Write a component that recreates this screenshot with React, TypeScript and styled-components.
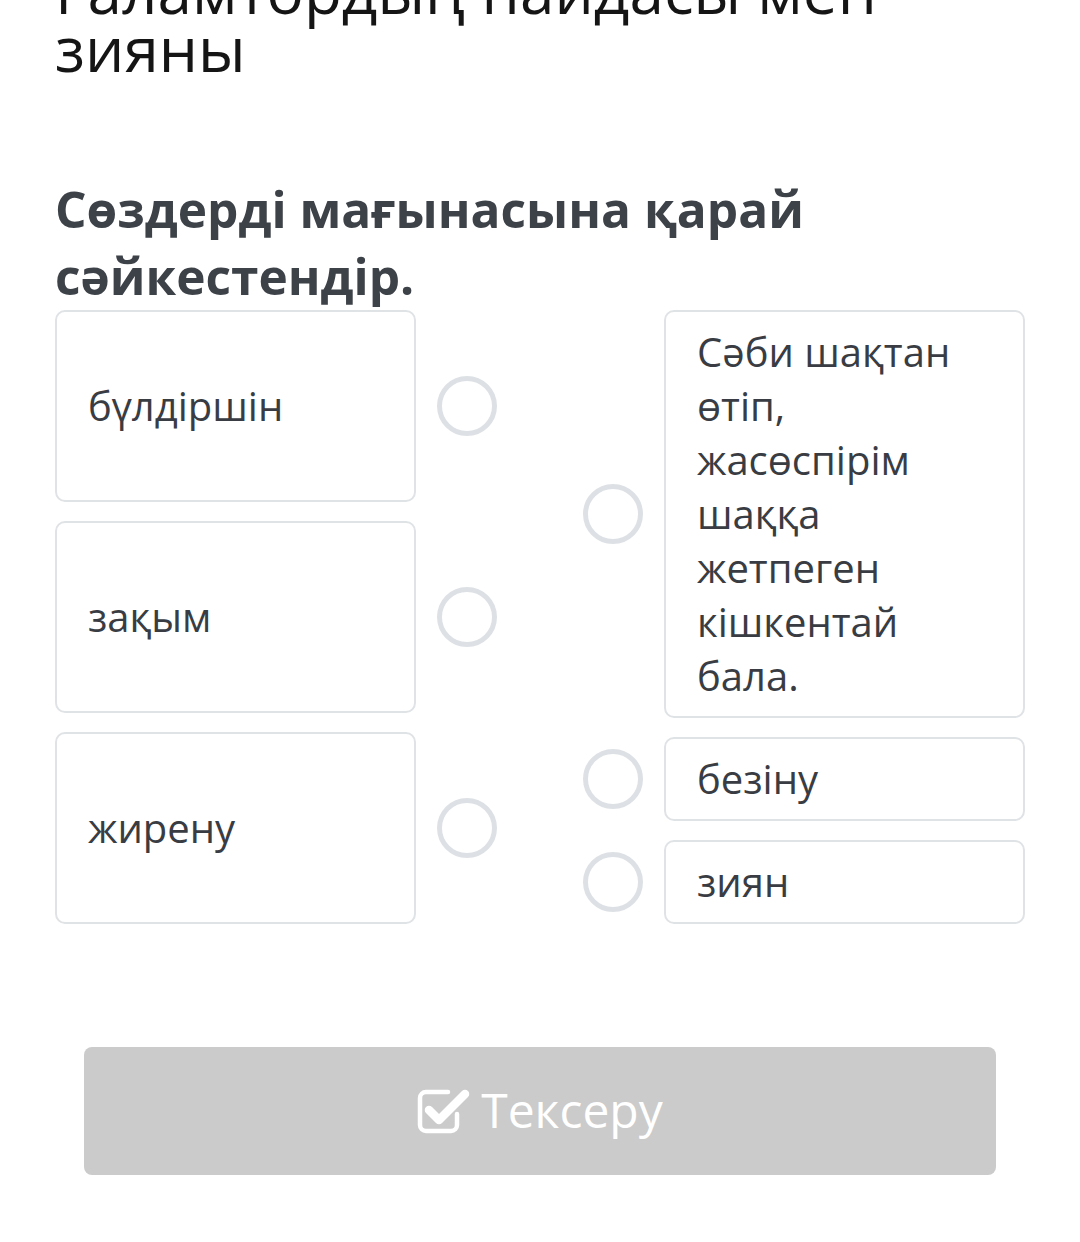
import styled, { createGlobalStyle } from "styled-components";

const GlobalStyle = createGlobalStyle`
    html, body {
        margin: 0;
        padding: 0;
        background: #ffffff;
    }
    body {
        font-family: "Open Sans", "Noto Sans", sans-serif;
        overflow: hidden;
    }
`;

const Page = styled.div`
    padding: 0 55px;
    width: 1080px;
    height: 1242px;
    box-sizing: border-box;
    overflow: hidden;
`;

const Title = styled.h1`
    margin: -39px 0 0 0;
    font-size: 62px;
    line-height: 58px;
    font-weight: 400;
    color: #151515;
`;

const Question = styled.h2`
    margin: 99px 0 0 0;
    font-size: 49.6px;
    line-height: 67px;
    font-weight: 700;
    color: #3d4249;
`;

const Board = styled.div`
    display: flex;
    gap: 86px;
`;

const Column = styled.div`
    display: flex;
    flex-direction: column;
    gap: 19px;
`;

const Row = styled.div<{ $grow?: boolean }>`
    display: flex;
    align-items: center;
    gap: 21px;
    flex: ${(p) => (p.$grow ? "1" : "0 0 auto")};
`;

const Card = styled.div<{ $fill?: boolean }>`
    width: 361px;
    box-sizing: border-box;
    align-self: ${(p) => (p.$fill ? "stretch" : "auto")};
    display: flex;
    align-items: center;
    padding: 13px 31px;
    border: 2px solid #e0e3e6;
    border-radius: 10px;
    font-size: 40px;
    line-height: 54px;
    color: #393d43;
`;

const Dot = styled.div`
    width: 60px;
    height: 60px;
    box-sizing: border-box;
    border: 5px solid #dde1e5;
    border-radius: 50%;
    flex: 0 0 auto;
`;

const Button = styled.button`
    margin: 123px 29px 0;
    width: calc(100% - 58px);
    height: 128px;
    border: none;
    border-radius: 8px;
    background: #cbcbcb;
    color: #ffffff;
    font-family: "Open Sans", "Noto Sans", sans-serif;
    font-size: 48px;
    display: flex;
    align-items: center;
    justify-content: center;
    gap: 10px;
    padding: 0;
`;

const ButtonLabel = styled.span`
    line-height: 1;
    margin-top: -2px;
`;

const leftWords = ["бүлдіршін", "зақым", "жирену"];
const rightWords = [
    "Сәби шақтан өтіп, жасөспірім шаққа жетпеген кішкентай бала.",
    "безіну",
    "зиян",
];

function CheckIcon() {
    return (
        <svg width="54" height="48" viewBox="0 0 54 48" fill="none">
            <path
                d="M31 5 H9 a6 6 0 0 0 -6 6 V38 a6 6 0 0 0 6 6 H34 a6 6 0 0 0 6 -6 V27"
                stroke="#ffffff"
                strokeWidth="4.5"
                strokeLinecap="round"
                strokeLinejoin="round"
            />
            <path
                d="M12 23 L22 33 L48 7"
                stroke="#ffffff"
                strokeWidth="8.5"
                strokeLinecap="round"
                strokeLinejoin="round"
            />
        </svg>
    );
}

export default function App() {
    return (
        <>
            <GlobalStyle />
            <Page>
                <Title>Ғаламтордың пайдасы мен зияны</Title>
                <Question>Сөздерді мағынасына қарай сәйкестендір.</Question>
                <Board>
                    <Column>
                        {leftWords.map((w) => (
                            <Row key={w} $grow>
                                <Card $fill>{w}</Card>
                                <Dot />
                            </Row>
                        ))}
                    </Column>
                    <Column>
                        {rightWords.map((w) => (
                            <Row key={w}>
                                <Dot />
                                <Card>{w}</Card>
                            </Row>
                        ))}
                    </Column>
                </Board>
                <Button>
                    <CheckIcon />
                    <ButtonLabel>Тексеру</ButtonLabel>
                </Button>
            </Page>
        </>
    );
}
